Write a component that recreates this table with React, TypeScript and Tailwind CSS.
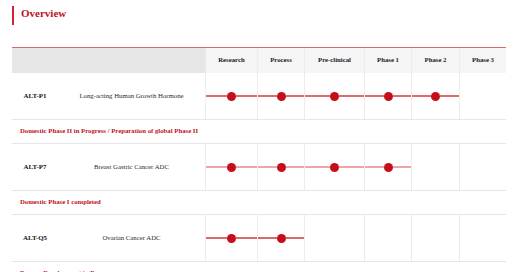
import React from "react";

const phases = ["Research", "Process", "Pre-clinical", "Phase 1", "Phase 2", "Phase 3"];

type Item = {
  id: string;
  name: string;
  reached: number;
  line: string;
  note: string;
};

const items: Item[] = [
  {
    id: "ALT-P1",
    name: "Long-acting Human Growth Hormone",
    reached: 5,
    line: "bg-[#e26a6a]",
    note: "Domestic Phase II in Progress / Preparation of global Phase II",
  },
  {
    id: "ALT-P7",
    name: "Breast Gastric Cancer ADC",
    reached: 4,
    line: "bg-[#f0a4a4]",
    note: "Domestic Phase I completed",
  },
  {
    id: "ALT-Q5",
    name: "Ovarian Cancer ADC",
    reached: 2,
    line: "bg-[#d96a6a]",
    note: "Process Development in Progress",
  },
];

const grid =
  "grid grid-cols-[46px_147px_52px_47px_60px_47px_48px_47px]";

function StageCell({ filled, line }: { filled: boolean; line: string }) {
  return (
    <div className="flex items-center border-l border-[#ececec]">
      {filled && (
        <>
          <div className={`h-[1.5px] flex-1 ${line}`} />
          <div className="h-[9px] w-[9px] shrink-0 rounded-full bg-[#c40f1b]" />
          <div className={`h-[1.5px] flex-1 ${line}`} />
        </>
      )}
    </div>
  );
}

export default function App() {
  return (
    <div className="h-[272px] w-[520px] overflow-hidden bg-white font-['Liberation_Serif',serif]">
      <div className="pl-3 pt-[6px]">
        <div className="h-[19px] border-l-2 border-[#d2232f] pl-[7px]">
          <h1 className="pt-[1px] text-[11px] font-bold leading-[13px] text-[#c0111c]">Overview</h1>
        </div>
      </div>

      <div className="ml-3 mt-[22px] w-[494px]">
        <div className={`${grid} h-[26px] border-t border-[#dc6a6a]`}>
          <div className="col-span-2 bg-[#e6e6e6]" />
          {phases.map((p) => (
            <div
              key={p}
              className="flex items-center justify-center border-l border-[#ececec] bg-[#f5f5f5] text-[6.75px] font-bold text-[#1a1a1a]"
            >
              {p}
            </div>
          ))}
        </div>

        {items.map((item) => (
          <React.Fragment key={item.id}>
            <div className={`${grid} h-[47px] border-b border-[#e6e6e6]`}>
              <div className="flex items-center justify-center text-[6.9px] font-bold text-[#111]">
                {item.id}
              </div>
              <div className="flex items-center justify-center text-[6.75px] text-[#2a2a2a]">
                {item.name}
              </div>
              {phases.map((p, i) => (
                <StageCell key={p} filled={i < item.reached} line={item.line} />
              ))}
            </div>
            <div className="flex h-[24px] items-center border-b border-[#e6e6e6] pl-2 text-[6.75px] font-bold text-[#c0111c]">
              {item.note}
            </div>
          </React.Fragment>
        ))}
      </div>
    </div>
  );
}
